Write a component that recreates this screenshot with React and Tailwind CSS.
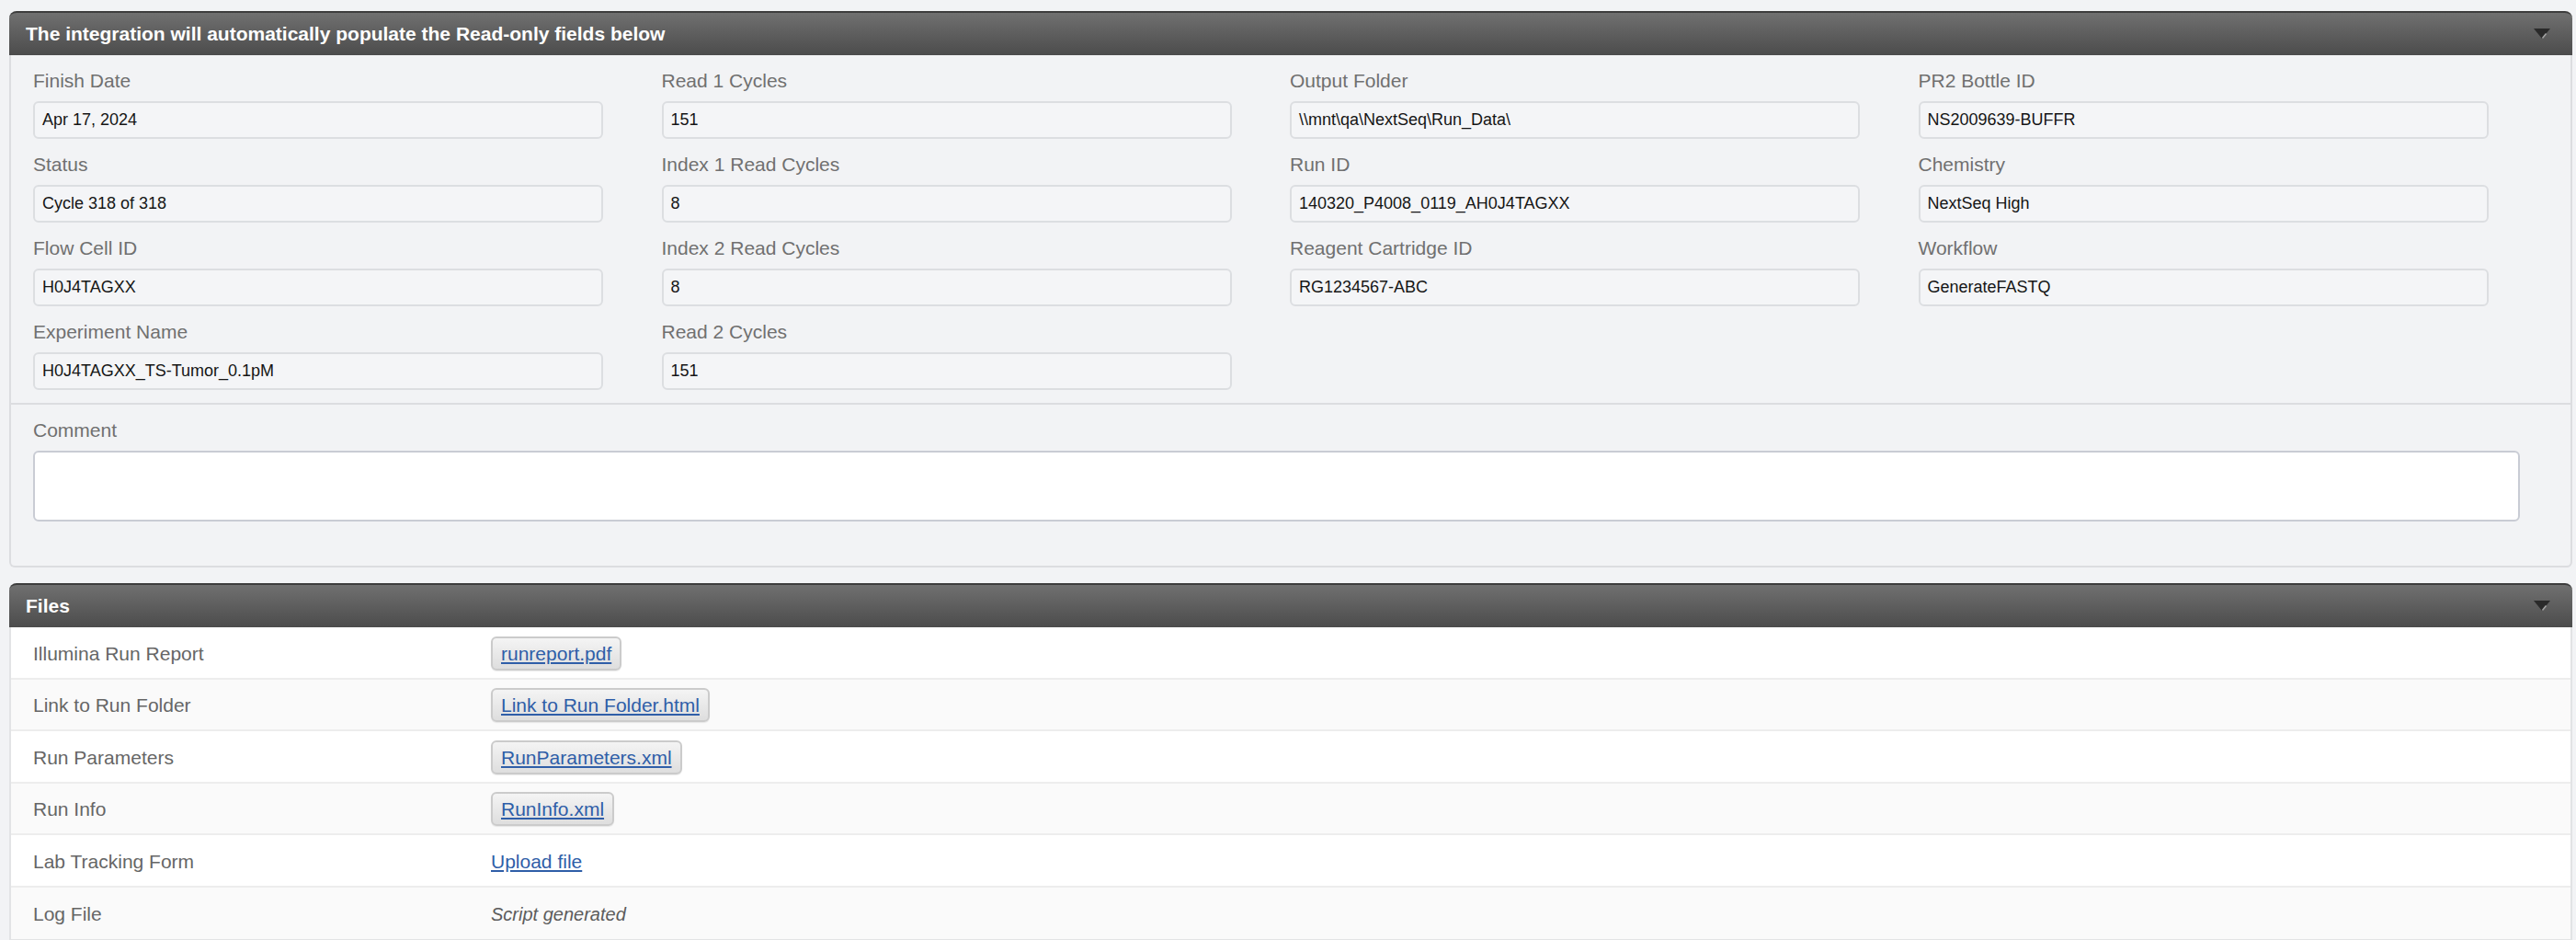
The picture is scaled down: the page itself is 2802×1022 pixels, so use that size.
import React from 'react';

const columns = [
  [
    ['Finish Date', 'Apr 17, 2024'],
    ['Status', 'Cycle 318 of 318'],
    ['Flow Cell ID', 'H0J4TAGXX'],
    ['Experiment Name', 'H0J4TAGXX_TS-Tumor_0.1pM'],
  ],
  [
    ['Read 1 Cycles', '151'],
    ['Index 1 Read Cycles', '8'],
    ['Index 2 Read Cycles', '8'],
    ['Read 2 Cycles', '151'],
  ],
  [
    ['Output Folder', '\\\\mnt\\qa\\NextSeq\\Run_Data\\'],
    ['Run ID', '140320_P4008_0119_AH0J4TAGXX'],
    ['Reagent Cartridge ID', 'RG1234567-ABC'],
  ],
  [
    ['PR2 Bottle ID', 'NS2009639-BUFFR'],
    ['Chemistry', 'NextSeq High'],
    ['Workflow', 'GenerateFASTQ'],
  ],
];

const files = [
  { label: 'Illumina Run Report', file: 'runreport.pdf' },
  { label: 'Link to Run Folder', file: 'Link to Run Folder.html' },
  { label: 'Run Parameters', file: 'RunParameters.xml' },
  { label: 'Run Info', file: 'RunInfo.xml' },
  { label: 'Lab Tracking Form', upload: 'Upload file' },
  { label: 'Log File', note: 'Script generated' },
];

const Caret = () => (
  <svg width="18" height="12" viewBox="0 0 18 12">
    <polygon points="0,0 18,0 9,11" fill="#2a2a2a" />
    <line x1="13.5" y1="5.5" x2="9.5" y2="10.5" stroke="#a5a5a5" strokeWidth="1.5" />
  </svg>
);

const PanelHeader = ({ title }) => (
  <div className="h-[48px] rounded-t-[8px] bg-linear-to-b from-[#707070] to-[#4c4c4c] border-t-2 border-[#3d3d3d] flex items-center justify-between pl-[18px] pr-[24px]">
    <span className="text-white font-bold text-[21px]">{title}</span>
    <Caret />
  </div>
);

const Field = ({ label, value }) => (
  <div className="flex flex-col">
    <span className="text-[21px] leading-[26px] text-[#707070]">{label}</span>
    <div className="mt-[9px] h-[41px] border-2 border-[#dcdee1] rounded-[6px] bg-[#f4f5f7] px-[8px] flex items-center text-[18px] text-[#151515]">
      {value}
    </div>
  </div>
);

export default function App() {
  return (
    <div className="min-h-screen bg-[#f2f3f5] pt-[12px] pl-[10px] pr-[4px] font-['Liberation_Sans',Arial,sans-serif]">
      <PanelHeader title="The integration will automatically populate the Read-only fields below" />
      <div className="border-x-2 border-b-2 border-[#dcdde0] bg-[#f2f3f5] rounded-b-[6px]">
        <div className="flex gap-x-[63.5px] pl-[24px] pt-[15px] pb-[14px]">
          {columns.map((col, i) => (
            <div key={i} className="w-[620px] flex flex-col gap-y-[15px]">
              {col.map(([label, value]) => (
                <Field key={label} label={label} value={value} />
              ))}
            </div>
          ))}
        </div>
        <div className="border-t-2 border-[#dcdde0] pl-[24px] pr-[55px] pt-[15px] pb-[48px]">
          <div className="text-[21px] leading-[26px] text-[#707070]">Comment</div>
          <div className="mt-[9px] h-[77px] bg-white border-2 border-[#c9ccd4] rounded-[6px]" />
        </div>
      </div>

      <div className="mt-[17px]">
        <PanelHeader title="Files" />
        <div className="border-x-2 border-b-2 border-[#e2e3e5] bg-white">
          {files.map((f, i) => (
            <div
              key={f.label}
              className={`h-[56.5px] grid grid-cols-[498px_1fr] items-center pl-[24px] pt-[2px] ${i % 2 === 1 ? 'bg-[#fafafa]' : 'bg-white'} ${i < files.length - 1 ? 'border-b-2 border-[#ededed]' : ''}`}
            >
              <span className="text-[21px] text-[#666666]">{f.label}</span>
              <div className="flex items-center">
                {f.file && (
                  <span className="h-[37px] px-[9px] flex items-center rounded-[6px] border-2 border-[#cbcbcb] bg-linear-to-b from-[#f4f4f4] to-[#dedede] shadow-[0_1px_1px_rgba(0,0,0,0.08)]">
                    <a href="#" className="text-[21px] text-[#2f5ea8] underline">{f.file}</a>
                  </span>
                )}
                {f.upload && (
                  <a href="#" className="text-[21px] text-[#2f5ea8] underline">{f.upload}</a>
                )}
                {f.note && <span className="text-[20px] italic text-[#5c5c5c]">{f.note}</span>}
              </div>
            </div>
          ))}
        </div>
      </div>
    </div>
  );
}
